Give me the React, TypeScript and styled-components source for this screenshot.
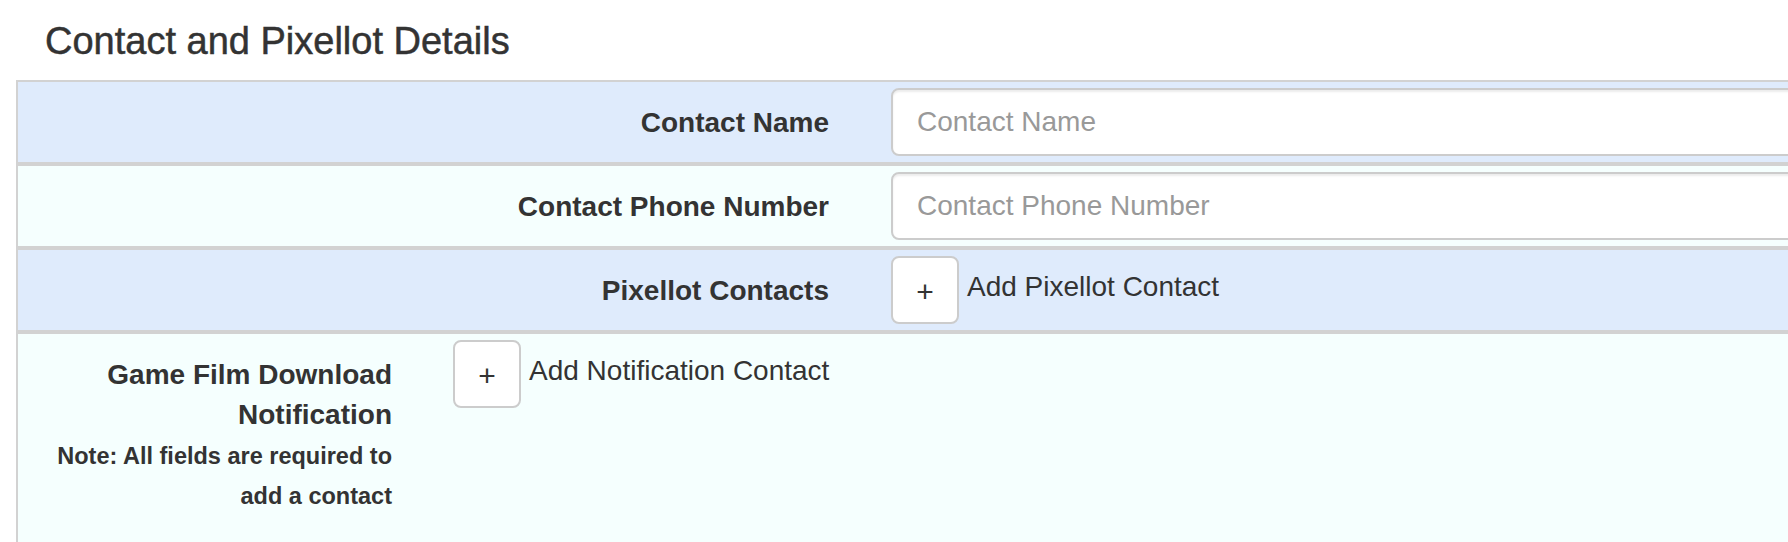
import styled, { createGlobalStyle } from 'styled-components'

const GlobalStyle = createGlobalStyle`
  html, body {
    margin: 0;
    padding: 0;
    background: #fff;
    overflow: hidden;
  }

  body {
    font-family: 'Liberation Sans', Arial, Helvetica, sans-serif;
    color: #333;
  }
`

const Page = styled.div`
  padding: 0 0 0 16px;
`

const Title = styled.h4`
  margin: 21px 0 19px;
  padding-left: 29px;
  font-size: 38px;
  line-height: 40px;
  font-weight: 400;
  color: #333;
  -webkit-text-stroke: 0.5px #333;
`

const Table = styled.div`
  width: calc(100% + 60px);
  border-top: 2px solid #d2d2d2;
  border-left: 2px solid #d2d2d2;
`

const Row = styled.div<{ $bg: string, $labelWidth: number }>`
  display: grid;
  grid-template-columns: ${(props) => props.$labelWidth}px 1fr;
  background: ${(props) => props.$bg};
  padding: 6px 0;

  & + & {
    border-top: 4px solid #d2d2d2;
  }

  &:last-child {
    padding-bottom: 26px;
  }
`

const Label = styled.div`
  padding: 15px 30px 0 0;
  text-align: right;
  font-size: 28px;
  line-height: 40px;
  font-weight: 700;
  color: #333;
`

const Note = styled.div`
  margin-top: 1px;
  font-size: 23.5px;
  line-height: 40px;
  font-weight: 700;
`

const Field = styled.div<{ $gap: number }>`
  display: flex;
  align-items: flex-start;
  padding-left: ${(props) => props.$gap}px;
  min-width: 0;
`

const Input = styled.input`
  box-sizing: border-box;
  width: 100%;
  height: 68px;
  padding: 12px 24px;
  border: 2px solid #ccc;
  border-radius: 8px;
  background: #fff;
  box-shadow: inset 0 2px 2px rgba(0, 0, 0, 0.075);
  font-family: 'Liberation Sans', Arial, Helvetica, sans-serif;
  font-size: 28px;
  line-height: 40px;
  color: #555;
  outline: none;

  &::placeholder {
    color: #999;
    opacity: 1;
  }
`

const AddButton = styled.button`
  box-sizing: border-box;
  flex: none;
  width: 68px;
  height: 68px;
  padding: 0;
  border: 2px solid #ccc;
  border-radius: 8px;
  background: #fff;
  font-family: 'Liberation Sans', Arial, Helvetica, sans-serif;
  font-size: 30px;
  line-height: 68px;
  color: #333;
  cursor: pointer;
`

const AddText = styled.span`
  margin: 11px 0 0 8px;
  font-size: 28px;
  line-height: 40px;
  color: #333;
  white-space: nowrap;
`

const BLUE = '#dfebfc'
const CYAN = '#f5fffe'

const App = () => {
  return (
    <Page>
      <GlobalStyle />
      <Title>Contact and Pixellot Details</Title>
      <Table>
        <Row $bg={BLUE} $labelWidth={841}>
          <Label>Contact Name</Label>
          <Field $gap={32}>
            <Input placeholder="Contact Name" />
          </Field>
        </Row>
        <Row $bg={CYAN} $labelWidth={841}>
          <Label>Contact Phone Number</Label>
          <Field $gap={32}>
            <Input placeholder="Contact Phone Number" />
          </Field>
        </Row>
        <Row $bg={BLUE} $labelWidth={841}>
          <Label>Pixellot Contacts</Label>
          <Field $gap={32}>
            <AddButton type="button">+</AddButton>
            <AddText>Add Pixellot Contact</AddText>
          </Field>
        </Row>
        <Row $bg={CYAN} $labelWidth={404}>
          <Label>
            Game Film Download<br />
            Notification
            <Note>
              Note: All fields are required to<br />
              add a contact
            </Note>
          </Label>
          <Field $gap={31}>
            <AddButton type="button">+</AddButton>
            <AddText>Add Notification Contact</AddText>
          </Field>
        </Row>
      </Table>
    </Page>
  )
}

export default App
